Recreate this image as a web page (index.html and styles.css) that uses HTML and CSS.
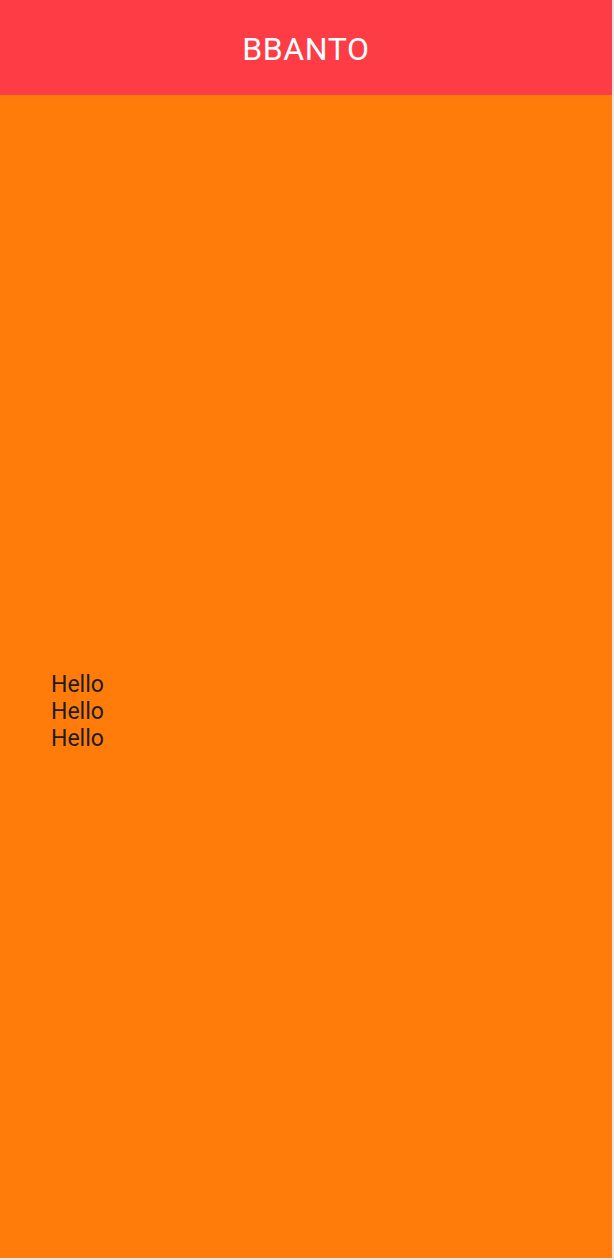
FILE: index.html
```html
<!DOCTYPE html>
<html>
<head>
<meta charset="utf-8">
<link rel="stylesheet" href="styles.css">
</head>
<body>
<div class="app">
  <header class="bar"><span class="title">BBANTO</span></header>
  <main class="content">
    <div class="lines">
      <div class="line">Hello</div>
      <div class="line">Hello</div>
      <div class="line">Hello</div>
    </div>
  </main>
</div>
</body>
</html>
```
FILE: styles.css
```css
html, body { margin: 0; padding: 0; }
body { background: #e6e6e6; font-family: Roboto, "Noto Sans", sans-serif; }
.app { width: 612px; height: 1258px; display: flex; flex-direction: column; }
.bar { height: 95px; background: #fe3c45; display: flex; align-items: center; justify-content: center; }
.title { color: #fff; font-size: 32px; letter-spacing: 0.6px; padding-top: 2px; }
.content { flex: 1; background: #ff7c0a; padding: 0 0 0 51px; display: flex; align-items: flex-start; }
.lines { margin-top: 576px; }
.line { font-size: 23px; line-height: 27px; color: #1c1c1c; }
```
